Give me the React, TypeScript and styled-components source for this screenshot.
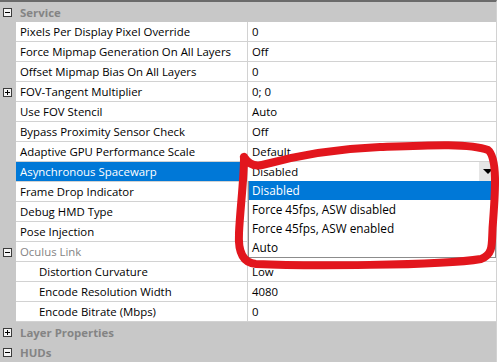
import React, { FC } from 'react'
import styled, { createGlobalStyle } from 'styled-components'

const GlobalStyle = createGlobalStyle`
	html, body {
		margin: 0;
		padding: 0;
		background: #ffffff;
	}
	body {
		font-family: 'Open Sans', 'Noto Sans', 'DejaVu Sans', sans-serif;
		font-size: 11.4px;
		color: #000000;
	}
`

const Page = styled.div`
	position: relative;
	width: 503px;
	height: 362px;
	overflow: hidden;
`

const Grid = styled.div`
	width: 496px;
	height: 360px;
	border-top: 2px solid #6b6b6b;
	border-right: 1px solid #d2d2d2;
	background: #c8c8c8;
	display: flex;
	flex-direction: column;
`

const Row = styled.div`
	display: flex;
	height: 20px;
	flex: none;
`

const Gutter = styled.div`
	width: 16px;
	flex: none;
	display: flex;
	align-items: center;
	justify-content: center;
	background: #c8c8c8;
`

const Expander = styled.span`
	position: relative;
	width: 7px;
	height: 7px;
	border: 1px solid #3c3c3c;
	background: #f4f4f4;
	margin-left: -1px;
	&::before {
		content: '';
		position: absolute;
		left: 1px;
		top: 3px;
		width: 5px;
		height: 1px;
		background: #000;
	}
	&::after {
		content: '';
		position: absolute;
		left: 3px;
		top: 1px;
		width: 1px;
		height: 5px;
		background: #000;
		display: ${(p: { open?: boolean }) => (p.open ? 'none' : 'block')};
	}
`

const CategoryLabel = styled.div`
	flex: 1;
	display: flex;
	align-items: center;
	padding-left: 4px;
	font-weight: 700;
	color: #848484;
`

const Label = styled.div<{ selected?: boolean; indent?: boolean; muted?: boolean }>`
	width: 231px;
	flex: none;
	box-sizing: border-box;
	display: flex;
	align-items: center;
	padding-left: ${(p) => (p.indent ? '23px' : '4px')};
	border-bottom: 1px solid #d2d2d2;
	background: ${(p) => (p.selected ? '#0078d7' : '#ffffff')};
	color: ${(p) => (p.selected ? '#ffffff' : p.muted ? '#848484' : '#000000')};
	white-space: nowrap;
	overflow: hidden;
`

const Value = styled.div`
	position: relative;
	flex: 1;
	box-sizing: border-box;
	display: flex;
	align-items: center;
	padding-left: 4px;
	border-left: 1px solid #d2d2d2;
	border-bottom: 1px solid #d2d2d2;
	background: #ffffff;
	white-space: nowrap;
`

const ValueText = styled.span`
	flex: 1;
`

const DropButton = styled.div`
	width: 17px;
	height: 19px;
	align-self: flex-start;
	background: #e6e6e6;
	display: flex;
	align-items: center;
	justify-content: center;
	&::after {
		content: '';
		border-left: 5px solid transparent;
		border-right: 5px solid transparent;
		border-top: 5px solid #000;
	}
`

const DropList = styled.ul`
	position: absolute;
	left: 0;
	top: 19px;
	width: 248px;
	box-sizing: border-box;
	margin: 0;
	padding: 0;
	list-style: none;
	background: #ffffff;
	border: 1px solid #8c8c8c;
	border-top: none;
	z-index: 2;
`

const DropItem = styled.li<{ selected?: boolean }>`
	height: 19px;
	line-height: 19px;
	padding-left: 3px;
	font-size: 11.8px;
	background: ${(p) => (p.selected ? '#0078d7' : 'transparent')};
	color: ${(p) => (p.selected ? '#ffffff' : '#000000')};
`

const Scribble = styled.svg`
	position: absolute;
	left: 0;
	top: 0;
	pointer-events: none;
	z-index: 3;
`

type Prop = {
	label: string
	value?: string
	expand?: 'open' | 'closed'
	indent?: boolean
	muted?: boolean
}

const serviceProps: Prop[] = [
	{ label: 'Pixels Per Display Pixel Override', value: '0' },
	{ label: 'Force Mipmap Generation On All Layers', value: 'Off' },
	{ label: 'Offset Mipmap Bias On All Layers', value: '0' },
	{ label: 'FOV-Tangent Multiplier', value: '0; 0', expand: 'closed' },
	{ label: 'Use FOV Stencil', value: 'Auto' },
	{ label: 'Bypass Proximity Sensor Check', value: 'Off' },
	{ label: 'Adaptive GPU Performance Scale', value: 'Default' },
]

const afterProps: Prop[] = [
	{ label: 'Frame Drop Indicator', value: '' },
	{ label: 'Debug HMD Type', value: '' },
	{ label: 'Pose Injection', value: '' },
	{ label: 'Oculus Link', value: '', expand: 'open', muted: true },
	{ label: 'Distortion Curvature', value: 'Low', indent: true },
	{ label: 'Encode Resolution Width', value: '4080', indent: true },
	{ label: 'Encode Bitrate (Mbps)', value: '0', indent: true },
]

const aswOptions = ['Disabled', 'Force 45fps, ASW disabled', 'Force 45fps, ASW enabled', 'Auto']

const PropRow: FC<{ prop: Prop }> = ({ prop }) => (
	<Row>
		<Gutter>{prop.expand && <Expander open={prop.expand === 'open'} />}</Gutter>
		<Label indent={prop.indent} muted={prop.muted}>{prop.label}</Label>
		<Value>{prop.value}</Value>
	</Row>
)

const Category: FC<{ name: string; open: boolean }> = ({ name, open }) => (
	<Row>
		<Gutter>
			<Expander open={open} />
		</Gutter>
		<CategoryLabel>{name}</CategoryLabel>
	</Row>
)

const App: FC = () => {
	return (
		<Page>
			<GlobalStyle />
			<Grid>
				<Category name="Service" open />
				{serviceProps.map((p) => (
					<PropRow key={p.label} prop={p} />
				))}
				<Row>
					<Gutter />
					<Label selected>Asynchronous Spacewarp</Label>
					<Value>
						<ValueText>Disabled</ValueText>
						<DropButton />
						<DropList>
							{aswOptions.map((o, i) => (
								<DropItem key={o} selected={i === 0}>
									{o}
								</DropItem>
							))}
						</DropList>
					</Value>
				</Row>
				{afterProps.map((p) => (
					<PropRow key={p.label} prop={p} />
				))}
				<Category name="Layer Properties" open={false} />
				<Category name="HUDs" open />
			</Grid>
			<Scribble width="503" height="362" viewBox="0 0 503 362">
				<path
					d="M 244 157 C 248 163, 254 167, 262 165 C 295 156, 330 149, 380 147 C 430 145, 470 143, 488 150 C 498 158, 495 195, 493 222 C 491 242, 495 254, 481 259 C 440 266, 300 266, 256 264 C 242 263, 238 250, 239 233 C 240 210, 244 180, 244 157"
					fill="none"
					stroke="#e2161d"
					strokeWidth="8"
					strokeLinecap="round"
					strokeLinejoin="round"
				/>
			</Scribble>
		</Page>
	)
}

export default App
